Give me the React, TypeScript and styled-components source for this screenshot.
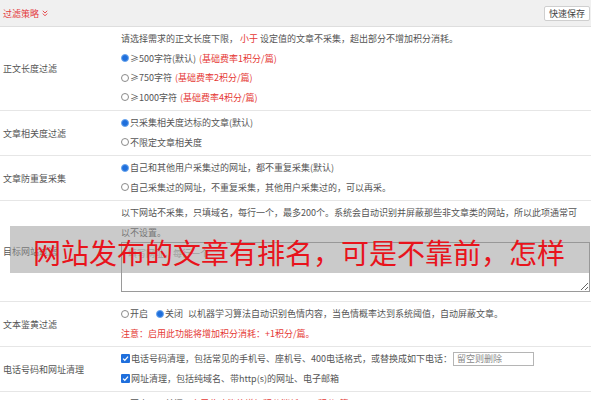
import React, { FC, ReactNode } from 'react'
import styled, { createGlobalStyle } from 'styled-components'

const GlobalStyle = createGlobalStyle`
  html, body {
    margin: 0;
    padding: 0;
    background: #fff;
  }
  body {
    font-family: 'Noto Sans CJK SC', 'Noto Sans', sans-serif;
    font-size: 9px;
    color: #555;
    overflow: hidden;
  }
`

const Page = styled.div`
  position: relative;
  width: 591px;
  height: 400px;
  overflow: hidden;
`

const Header = styled.div`
  height: 26px;
  background: #f0f0f0;
  border-bottom: 1px solid #dedede;
  display: flex;
  align-items: center;
  justify-content: space-between;
  padding: 0 1px 0 3px;
`

const HeaderTitle = styled.div`
  color: #e4393c;
  display: flex;
  align-items: center;
  gap: 3px;
`

const SaveButton = styled.button`
  font-family: inherit;
  font-size: 9px;
  color: #444;
  background: #fff;
  border: 1px solid #cfcfcf;
  border-radius: 2px;
  width: 46px;
  height: 15px;
  padding: 0;
  line-height: 13px;
`

const Row = styled.div`
  display: grid;
  grid-template-columns: 120px 1fr;
  border-bottom: 1px solid #e6e6e6;
`

const Label = styled.div`
  display: flex;
  align-items: center;
  padding-left: 3px;
  color: #555;
`

const Content = styled.div<{ $bottom?: number }>`
  padding: 2px 0 ${({ $bottom }) => $bottom ?? 3}px 1px;
  line-height: 19.5px;
`

const Line = styled.div`
  display: flex;
  align-items: center;
  height: 19.5px;
  white-space: nowrap;
`

const Para = styled.div`
  padding-right: 8px;
  line-height: 19.5px;
`

const Red = styled.span<{ $gap?: number }>`
  color: #e53935;
  margin-left: ${({ $gap }) => $gap ?? 0}px;
`

const RadioDot = styled.span<{ $checked?: boolean }>`
  display: inline-block;
  box-sizing: border-box;
  width: 8px;
  height: 8px;
  border-radius: 50%;
  border: 1px solid ${({ $checked }) => ($checked ? '#6aa6ee' : '#8a8a8a')};
  background: ${({ $checked }) => ($checked ? '#1f6fdc' : '#fff')};
  margin-right: 1px;
  flex: none;
`

const CheckBox = styled.span`
  display: inline-flex;
  align-items: center;
  justify-content: center;
  width: 9px;
  height: 9px;
  border-radius: 1px;
  background: #1f6fdc;
  margin-right: 1px;
  flex: none;
`

const Choice = styled.span<{ $gap?: number }>`
  display: inline-flex;
  align-items: center;
  margin-right: ${({ $gap }) => $gap ?? 0}px;
`

const TextArea = styled.textarea`
  display: block;
  box-sizing: border-box;
  width: 469px;
  height: 50px;
  margin: 0 0 9px;
  border: 1px solid #9a9a9a;
  border-radius: 0;
  font-family: inherit;
  font-size: 9px;
  padding: 4px 6px;
  color: #555;
  resize: vertical;
  &::placeholder {
    color: #aaa;
  }
`

const PhoneInput = styled.input`
  box-sizing: border-box;
  width: 81px;
  height: 14px;
  margin-left: 1px;
  border: 1px solid #b5b5b5;
  font-family: inherit;
  font-size: 9px;
  padding: 0 3px;
  &::placeholder {
    color: #888;
  }
`

const Banner = styled.div`
  position: absolute;
  left: 10px;
  top: 226px;
  width: 580px;
  height: 47px;
  background: rgba(150, 150, 150, 0.5);
  color: #e8141c;
  font-size: 28px;
  line-height: 47px;
  padding: 3px 0 0 23px;
  box-sizing: border-box;
  white-space: nowrap;
  font-family: 'Noto Sans CJK SC', sans-serif;
  font-weight: 400;
`

const Radio: FC<{ checked?: boolean; gap?: number; children: ReactNode }> = ({ checked, gap, children }) => (
  <Choice $gap={gap}>
    <RadioDot $checked={checked} />
    {children}
  </Choice>
)

const Check: FC<{ children: ReactNode }> = ({ children }) => (
  <Choice>
    <CheckBox>
      <svg width='7' height='7' viewBox='0 0 10 10'>
        <path d='M1.5 5.2 L4 7.6 L8.6 2.4' stroke='#fff' strokeWidth='1.8' fill='none' />
      </svg>
    </CheckBox>
    {children}
  </Choice>
)

const App: FC = () => (
  <Page>
    <GlobalStyle />
    <Header>
      <HeaderTitle>
        过滤策略
        <svg width='6' height='7' viewBox='0 0 6 7'>
          <path d='M0.8 0.8 L3 3 L5.2 0.8 M0.8 3.6 L3 5.8 L5.2 3.6' stroke='#e4393c' strokeWidth='0.9' fill='none' />
        </svg>
      </HeaderTitle>
      <SaveButton>快速保存</SaveButton>
    </Header>

    <Row>
      <Label>正文长度过滤</Label>
      <Content>
        <Line>
          请选择需求的正文长度下限，<Red $gap={2}>小于</Red>&nbsp;设定值的文章不采集，超出部分不增加积分消耗。
        </Line>
        <Line>
          <Radio checked>≥500字符(默认)</Radio>
          <Red $gap={3}>(基础费率1积分/篇)</Red>
        </Line>
        <Line>
          <Radio>≥750字符</Radio>
          <Red $gap={3}>(基础费率2积分/篇)</Red>
        </Line>
        <Line>
          <Radio>≥1000字符</Radio>
          <Red $gap={3}>(基础费率4积分/篇)</Red>
        </Line>
      </Content>
    </Row>

    <Row>
      <Label>文章相关度过滤</Label>
      <Content>
        <Line>
          <Radio checked>只采集相关度达标的文章(默认)</Radio>
        </Line>
        <Line>
          <Radio>不限定文章相关度</Radio>
        </Line>
      </Content>
    </Row>

    <Row>
      <Label>文章防重复采集</Label>
      <Content>
        <Line>
          <Radio checked>自己和其他用户采集过的网址，都不重复采集(默认)</Radio>
        </Line>
        <Line>
          <Radio>自己采集过的网址，不重复采集，其他用户采集过的，可以再采。</Radio>
        </Line>
      </Content>
    </Row>

    <Row>
      <Label>目标网站过滤</Label>
      <Content $bottom={0}>
        <Para>
          以下网站不采集，只填域名，每行一个，最多200个。系统会自动识别并屏蔽那些非文章类的网站，所以此项通常可以不设置。
        </Para>
        <TextArea placeholder='填写网址，每行一个' />
      </Content>
    </Row>

    <Row>
      <Label>文本鉴黄过滤</Label>
      <Content>
        <Line>
          <Radio gap={8}>开启</Radio>
          <Radio checked gap={5}>关闭</Radio>
          以机器学习算法自动识别色情内容，当色情概率达到系统阈值，自动屏蔽文章。
        </Line>
        <Line>
          <Red>注意：启用此功能将增加积分消耗：+1积分/篇。</Red>
        </Line>
      </Content>
    </Row>

    <Row>
      <Label>电话号码和网址清理</Label>
      <Content>
        <Line>
          <Check>电话号码清理，包括常见的手机号、座机号、400电话格式，或替换成如下电话：</Check>
          <PhoneInput placeholder='留空则删除' />
        </Line>
        <Line>
          <Check>网址清理，包括纯域名、带http(s)的网址、电子邮箱</Check>
        </Line>
      </Content>
    </Row>

    <Row>
      <Label>图片本地化及去水印</Label>
      <Content>
        <Line>
          <Radio gap={8}>开启</Radio>
          <Radio checked gap={5}>关闭</Radio>
          <Red>(启用此功能将增加积分消耗：+1积分/篇)</Red>
        </Line>
      </Content>
    </Row>

    <Banner>网站发布的文章有排名，可是不靠前，怎样</Banner>
  </Page>
)

export default App
